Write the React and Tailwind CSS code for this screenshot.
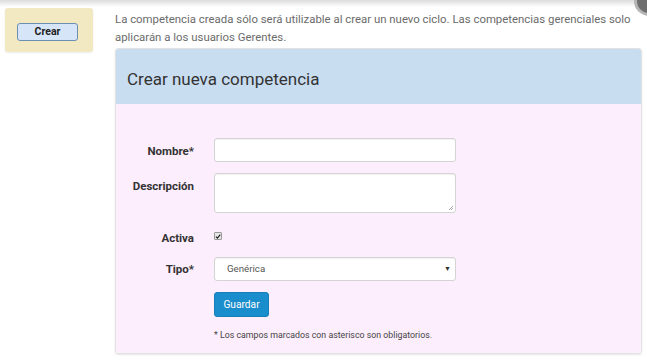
import React from 'react';

const labelCls = 'w-[78px] text-right text-[11.5px] font-bold text-[#333]';
const inputCls = 'w-[242px] bg-white border border-[#d4d4d4] rounded-[3px] shadow-[inset_0_1px_1px_rgba(0,0,0,0.06)]';

const App = () => {
  return (
    <div className="relative w-[647px] h-[361px] bg-white overflow-hidden font-['Roboto',sans-serif]">
      {/* top shadow */}
      <div className="absolute left-0 top-0 w-full h-[7px] bg-gradient-to-b from-[#dcdcdc] to-white" />
      {/* avatar corner */}
      <div className="absolute left-[634px] top-[-14px] w-[30px] h-[30px] rounded-full bg-[#6e6e6e] border-[3px] border-[#b5b5b5]" />

      <div className="relative flex gap-[22px] pl-[5px] pt-[8px]">
        {/* Left sidebar */}
        <div className="w-[88px] h-[44px] shrink-0 bg-[#f2e8c1] rounded-[3px] shadow-[0_1px_2px_rgba(0,0,0,0.08)] pl-[12px] pt-[15px]">
          <button className="block w-[61px] h-[18px] bg-[#d6e6f8] border border-[#6b8fb3] rounded-[3px] text-[10.5px] font-bold text-[#222] leading-none">
            Crear
          </button>
        </div>

        {/* Main */}
        <div className="w-[527px]">
          <p className="text-[11.4px] leading-[18px] text-[#6b6b6b] pt-[2px]">
            La competencia creada sólo será utilizable al crear un nuevo ciclo. Las competencias gerenciales solo aplicarán a los usuarios Gerentes.
          </p>

          <div className="mt-[2px] border border-[#e2e2e2] rounded-[3px] shadow-[0_1px_2px_rgba(0,0,0,0.1)] overflow-hidden">
            <div className="h-[55px] bg-[#c9ddf1] flex items-center pl-[11px] pt-[6px]">
              <h2 className="text-[17px] text-[#333]">Crear nueva competencia</h2>
            </div>
            <div className="bg-[#fdeefd] h-[249px] pt-[34px]">
              <div className="flex items-center gap-[20px]">
                <label className={`${labelCls} pt-[4px]`}>Nombre*</label>
                <div className={`${inputCls} h-[24px]`} />
              </div>
              <div className="flex items-start gap-[20px] mt-[11px]">
                <label className={`${labelCls} pt-[5px]`}>Descripción</label>
                <div className={`${inputCls} h-[40px] relative`}>
                  <svg className="absolute right-[1px] bottom-[1px]" width="6" height="6" viewBox="0 0 6 6">
                    <path d="M5 1L1 5M5 3L3 5" stroke="#999" strokeWidth="0.8" />
                  </svg>
                </div>
              </div>
              <div className="flex items-center gap-[20px] mt-[17px]">
                <label className={labelCls}>Activa</label>
                <div className="w-[8px] h-[8px] mt-[-5px] bg-[#e8e8e8] border border-[#999] rounded-[1px] flex items-center justify-center">
                  <svg width="7" height="7" viewBox="0 0 8 8">
                    <path d="M1.2 4.2L3.2 6.2L7 1.5" stroke="#222" strokeWidth="1.6" fill="none" />
                  </svg>
                </div>
              </div>
              <div className="flex items-center gap-[20px] mt-[10px]">
                <label className={labelCls}>Tipo*</label>
                <div className={`${inputCls} h-[24px] flex items-center justify-between pl-[12px] pr-[4px]`}>
                  <span className="text-[9.7px] text-[#555]">Genérica</span>
                  <span className="text-[7px] text-[#333]">▼</span>
                </div>
              </div>
              <div className="pl-[98px] mt-[11px]">
                <button className="block w-[55px] h-[25px] bg-[#1a8dcc] rounded-[3px] text-white text-[10.2px] border border-[#177fb9]">
                  Guardar
                </button>
                <p className="mt-[12px] text-[8.8px] text-[#444]">* Los campos marcados con asterisco son obligatorios.</p>
              </div>
            </div>
          </div>
        </div>
      </div>
    </div>
  );
};

export default App;
